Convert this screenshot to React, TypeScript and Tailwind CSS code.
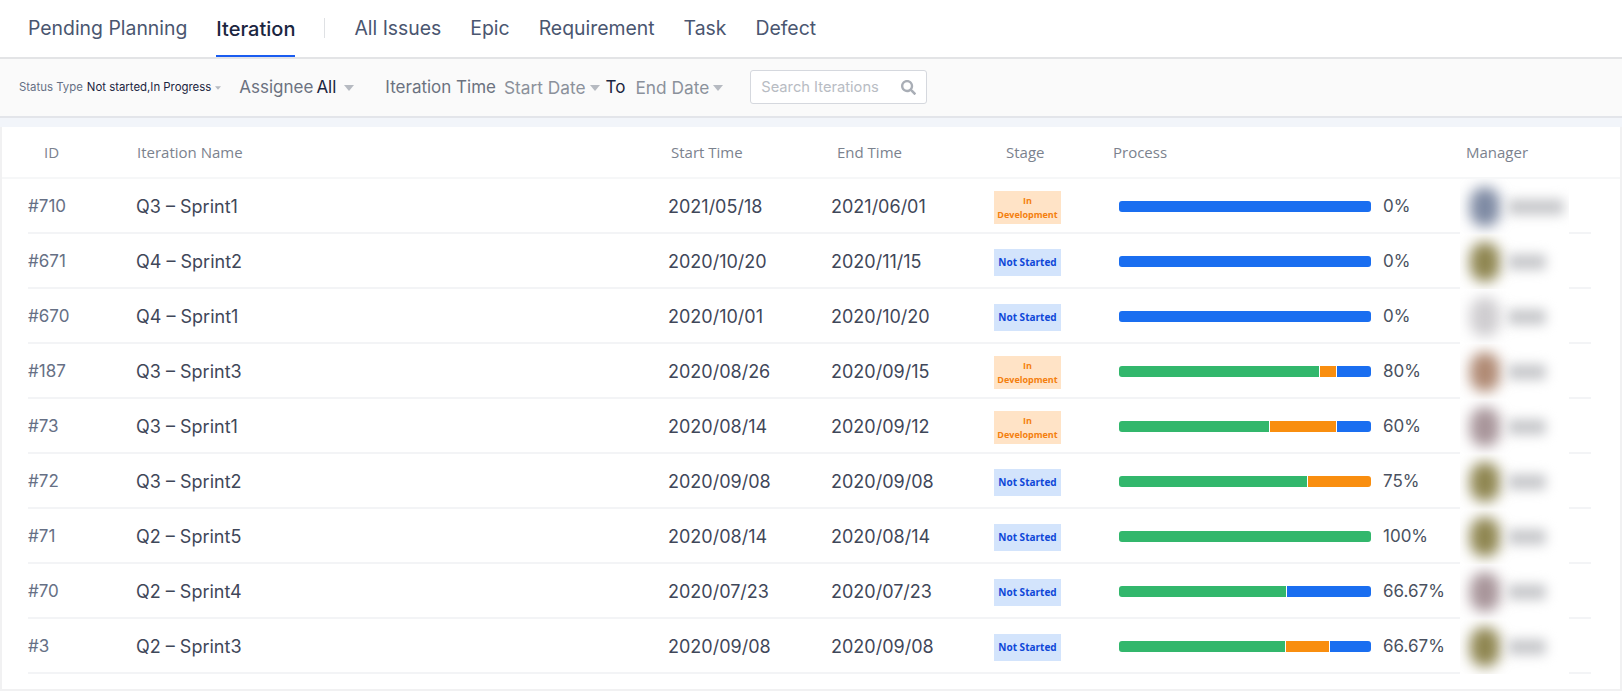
import { FaSearch } from "react-icons/fa";

const INTER = "font-['Inter','Noto_Sans',sans-serif]";

const GREEN = "bg-[#32b76c]";
const ORANGE = "bg-[#f98e0f]";
const BLUE = "bg-[#1a6ef0]";

type Seg = { w: number; c: string };

interface Row {
  id: string;
  name: string;
  start: string;
  end: string;
  stage: "dev" | "todo";
  segs: Seg[];
  pct: string;
  avatar: string;
  nameW: string;
}

const rows: Row[] = [
  { id: "#710", name: "Q3 – Sprint1", start: "2021/05/18", end: "2021/06/01", stage: "dev", segs: [{ w: 100, c: BLUE }], pct: "0%", avatar: "bg-[#7e8aa3]", nameW: "w-[56px]" },
  { id: "#671", name: "Q4 – Sprint2", start: "2020/10/20", end: "2020/11/15", stage: "todo", segs: [{ w: 100, c: BLUE }], pct: "0%", avatar: "bg-[#8f8651]", nameW: "w-[38px]" },
  { id: "#670", name: "Q4 – Sprint1", start: "2020/10/01", end: "2020/10/20", stage: "todo", segs: [{ w: 100, c: BLUE }], pct: "0%", avatar: "bg-[#cfcdd0]", nameW: "w-[38px]" },
  { id: "#187", name: "Q3 – Sprint3", start: "2020/08/26", end: "2020/09/15", stage: "dev", segs: [{ w: 80, c: GREEN }, { w: 6.5, c: ORANGE }, { w: 13.5, c: BLUE }], pct: "80%", avatar: "bg-[#b08a74]", nameW: "w-[38px]" },
  { id: "#73", name: "Q3 – Sprint1", start: "2020/08/14", end: "2020/09/12", stage: "dev", segs: [{ w: 60, c: GREEN }, { w: 26.5, c: ORANGE }, { w: 13.5, c: BLUE }], pct: "60%", avatar: "bg-[#a8959a]", nameW: "w-[38px]" },
  { id: "#72", name: "Q3 – Sprint2", start: "2020/09/08", end: "2020/09/08", stage: "todo", segs: [{ w: 75, c: GREEN }, { w: 25, c: ORANGE }], pct: "75%", avatar: "bg-[#8f8651]", nameW: "w-[38px]" },
  { id: "#71", name: "Q2 – Sprint5", start: "2020/08/14", end: "2020/08/14", stage: "todo", segs: [{ w: 100, c: GREEN }], pct: "100%", avatar: "bg-[#8f8651]", nameW: "w-[38px]" },
  { id: "#70", name: "Q2 – Sprint4", start: "2020/07/23", end: "2020/07/23", stage: "todo", segs: [{ w: 66.5, c: GREEN }, { w: 33.5, c: BLUE }], pct: "66.67%", avatar: "bg-[#a8959a]", nameW: "w-[38px]" },
  { id: "#3", name: "Q2 – Sprint3", start: "2020/09/08", end: "2020/09/08", stage: "todo", segs: [{ w: 66.5, c: GREEN }, { w: 17, c: ORANGE }, { w: 16.5, c: BLUE }], pct: "66.67%", avatar: "bg-[#8f8651]", nameW: "w-[38px]" },
];

function Caret({ small }: { small?: boolean }) {
  return (
    <svg viewBox="0 0 10 6" className={small ? "w-[6px] h-[4px] shrink-0" : "w-[10px] h-[6px] shrink-0"}>
      <path d="M0 0h10L5 6z" fill="#b6bac1" />
    </svg>
  );
}

function StageBadge({ stage }: { stage: Row["stage"] }) {
  if (stage === "dev") {
    return (
      <div className="flex h-[33px] w-[67px] items-center justify-center bg-[#ffe3c6] text-center text-[9px] leading-[14px] font-bold text-[#f47f0e] font-['Open_Sans',sans-serif]">
        <span>
          In
          <br />
          Development
        </span>
      </div>
    );
  }
  return (
    <div className="flex h-[27px] w-[67px] items-center justify-center bg-[#d3e4fc] text-[10px] font-bold text-[#0f47d8] font-['Open_Sans',sans-serif]">
      Not Started
    </div>
  );
}

function Progress({ segs }: { segs: Seg[] }) {
  return (
    <div className="flex h-[11px] w-[252px] gap-px overflow-hidden rounded-[3px]">
      {segs.map((s, i) => (
        <div key={i} className={s.c} style={{ width: `${s.w}%` }} />
      ))}
    </div>
  );
}

function TableRow({ row }: { row: Row }) {
  return (
    <div className={`flex h-[55px] w-[1563px] items-center border-b-2 border-[#f3f4f6] pt-[2px] text-[18px] text-[#3f4759] ${INTER}`}>
      <div className="w-[108px] text-[17px] text-[#667085]">{row.id}</div>
      <div className="w-[532px]">{row.name}</div>
      <div className="w-[163px]">{row.start}</div>
      <div className="w-[163px]">{row.end}</div>
      <div className="mt-[2px] w-[125px]">
        <StageBadge stage={row.stage} />
      </div>
      <div className="flex w-[341px] items-center gap-3">
        <Progress segs={row.segs} />
        <span className="text-[17px] text-[#4a5160]">{row.pct}</span>
      </div>
      <div className="-mt-[2px] -mb-[2px] flex h-[55px] w-[109px] items-center gap-2 overflow-hidden bg-white pl-[10px]">
        <div className={`h-[40px] w-[30px] shrink-0 rounded-full blur-[7px] ${row.avatar}`} />
        <div className={`h-[16px] rounded-sm bg-[#c8c9cc] blur-[6px] ${row.nameW}`} />
      </div>
    </div>
  );
}

const navBefore = ["Pending Planning"];
const navAfter = ["All Issues", "Epic", "Requirement", "Task", "Defect"];

export default function App() {
  return (
    <div className={`flex h-[691px] w-[1622px] flex-col overflow-hidden bg-white ${INTER}`}>
      <nav className="flex h-[59px] items-start gap-[29px] border-b-2 border-[#e3e4e6] pl-[28px] text-[19.4px] text-[#4a5670]">
        {navBefore.map((t) => (
          <span key={t} className="flex h-[57px] items-center">{t}</span>
        ))}
        <span className="flex h-[57px] items-center border-b-2 border-[#1a5cf0] pt-[2px] text-[20px] font-medium text-[#1b2540]">Iteration</span>
        <span className="mt-[18px] h-[20px] w-px bg-[#dfe1e4]" />
        {navAfter.map((t) => (
          <span key={t} className="flex h-[57px] items-center">{t}</span>
        ))}
      </nav>

      <div className="flex h-[59px] items-center border-b-2 border-[#e3e5ea] bg-[#fafafa] pl-[19px]">
        <span className="text-[11.4px] text-[#667085]">Status Type</span>
        <span className="ml-1 text-[11.4px] text-[#1b2540]">Not started,In Progress</span>
        <span className="ml-1">
          <Caret small />
        </span>
        <span className="ml-[18px] text-[17px] text-[#6b7280]">Assignee</span>
        <span className="ml-[3px] text-[17px] text-[#1b2540]">All</span>
        <span className="ml-[8px]">
          <Caret />
        </span>
        <span className="ml-[31px] text-[17px] text-[#6b7280]">Iteration Time</span>
        <span className="ml-[8px] text-[17.3px] text-[#8b919b]">Start Date</span>
        <span className="ml-[4px]">
          <Caret />
        </span>
        <span className="ml-[6px] text-[17px] text-[#1b2540]">To</span>
        <span className="ml-[10px] text-[17.3px] text-[#8b919b]">End Date</span>
        <span className="ml-[4px]">
          <Caret />
        </span>
        <div className="-mt-[1px] ml-[27px] flex h-[34px] w-[177px] items-center rounded-[3px] border border-[#d5d8de] bg-white pl-[10px] pr-[10px]">
          <input
            readOnly
            placeholder="Search Iterations"
            className="w-full min-w-0 bg-transparent text-[14.7px] outline-none placeholder:text-[#b8bcc3]"
          />
          <FaSearch className="h-[15px] w-[15px] shrink-0 text-[#a9aeb6]" />
        </div>
      </div>

      <div className="h-[9px] bg-[#f2f5fa]" />

      <div className="flex-1 border-x-2 border-b-2 border-x-[#f1f1f2] border-b-[#f1f1f2]">
        <div className="flex h-[52px] items-center border-b-2 border-[#f6f7f8] pl-[26px] text-[15px] text-[#7b828e] font-['Open_Sans',sans-serif]">
          <div className="w-[108px] pl-[16px]">ID</div>
          <div className="w-[532px] pl-px">Iteration Name</div>
          <div className="w-[163px] pl-[3px]">Start Time</div>
          <div className="w-[163px] pl-[6px]">End Time</div>
          <div className="w-[125px] pl-[12px]">Stage</div>
          <div className="-ml-[6px] w-[353px]">Process</div>
          <div>Manager</div>
        </div>
        <div className="pl-[26px]">
          {rows.map((r) => (
            <TableRow key={r.id} row={r} />
          ))}
        </div>
      </div>
    </div>
  );
}
